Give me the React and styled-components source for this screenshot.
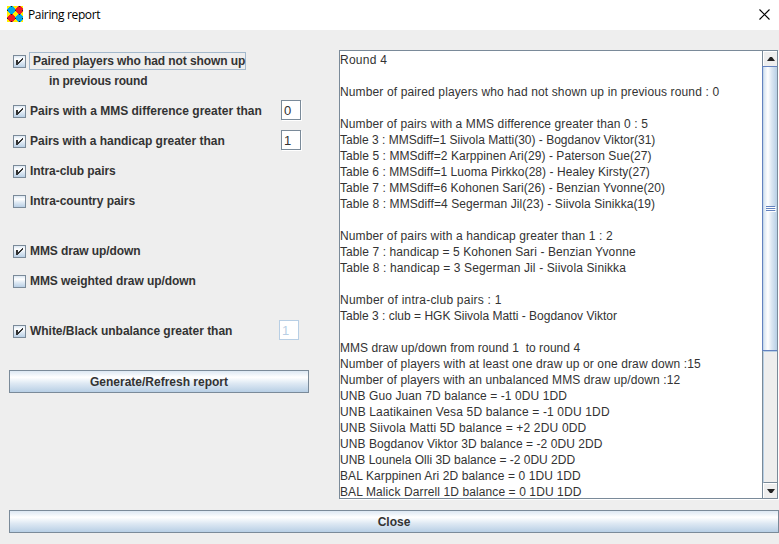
import React from 'react';
import styled, { createGlobalStyle, css } from 'styled-components';

const Global = createGlobalStyle`
  * { box-sizing: border-box; }
  body { margin: 0; overflow: hidden; }
`;

const steel = '#7a8a99';
const gloss = 'linear-gradient(#dde8f3 0, #ffffff 30%, #dde8f3 60%, #b8cfe5 100%)';

const Dialog = styled.div`
  width: 779px;
  height: 544px;
  background: #eee;
  color: #333;
  font: 12px/16px 'Liberation Sans', Arial, sans-serif;
  display: flex;
  flex-direction: column;
  overflow: hidden;
`;

const TitleBar = styled.header`
  height: 30px;
  flex: none;
  background: #fff;
  color: #000;
  display: flex;
  align-items: center;
  padding: 0 9px 2px 7px;
`;

const Title = styled.h1`
  margin: 2px auto 0 5px;
  font: 12px/16px 'Open Sans', 'Noto Sans', sans-serif;
  letter-spacing: -0.36px;
`;

const CloseIcon = styled.svg`
  width: 11px;
  height: 11px;
`;

const Content = styled.main`
  display: grid;
  grid-template-columns: 300px 439px;
  column-gap: 30px;
  padding: 20px 0 0 9px;
  height: 469px;
`;

const Options = styled.section`
  display: flex;
  flex-direction: column;
  padding-top: 1px;
`;

const Option = styled.label`
  display: flex;
  align-items: center;
  height: 20px;
  padding-left: 4px;
  margin-top: ${(p) => p.$gap ?? 10}px;
`;

const Box = styled.span`
  width: 13px;
  height: 13px;
  flex: none;
  border: 1px solid ${steel};
  background: ${gloss};
  svg { display: block; width: 11px; height: 11px; }
`;

const Caption = styled.span`
  margin-left: 4px;
  font-weight: bold;
  white-space: nowrap;
  letter-spacing: ${(p) => p.$spacing || 0}px;
  ${(p) => p.$focused && css`
    margin-left: 3px;
    width: 217px;
    height: 18px;
    border: 1px solid #a3b8cc;
    padding-left: 3px;
  `}
`;

const SubCaption = styled(Caption)`
  margin-left: 40px;
  height: 20px;
  line-height: 20px;
`;

const Field = styled.span`
  width: 20px;
  height: 20px;
  flex: none;
  align-self: flex-start;
  margin: -1px ${(p) => p.$right}px 0 auto;
  border: 1px solid ${(p) => (p.$disabled ? '#b8cfe5' : steel)};
  box-shadow: ${(p) => (p.$disabled ? 'none' : '1px 1px 0 #fff')};
  background: #fff;
  color: ${(p) => (p.$disabled ? '#b8cfe5' : '#333')};
  padding: 2px 0 0 2px;
  font-size: 13px;
  line-height: 16px;
`;

const Button = styled.button`
  height: 23px;
  flex: none;
  padding: 0;
  border: 1px solid ${steel};
  border-radius: 0;
  background: ${gloss};
  color: #333;
  font: bold 12px/20px 'Liberation Sans', Arial, sans-serif;
`;

const GenerateButton = styled(Button)`
  margin-top: 29px;
`;

const CloseButton = styled(Button)`
  margin: 11px 0 0 9px;
`;

const Report = styled.section`
  display: flex;
  border: 1px solid ${steel};
  box-shadow: 1px 1px 0 #fff;
  background: #fff;
  height: 449px;
  overflow: hidden;
`;

const Lines = styled.div`
  flex: 1;
  padding-top: 1px;
`;

const Line = styled.div`
  height: 16px;
  white-space: pre;
  letter-spacing: ${(p) => p.$spacing || 0}px;
`;

const ScrollBar = styled.div`
  width: 15px;
  flex: none;
  display: flex;
  flex-direction: column;
  border-left: 1px solid ${steel};
  background: #eee;
`;

const ArrowButton = styled.div`
  height: 15px;
  flex: none;
  border: 1px solid #fff;
  border-right: 0;
  border-bottom: 0;
  display: flex;
  align-items: center;
  justify-content: center;
  svg { width: 8px; height: 4px; }
`;

const Thumb = styled.div`
  height: 285px;
  flex: none;
  margin-left: -1px;
  border: 1px solid #6382bf;
  border-right: 0;
  background: linear-gradient(90deg, #b8cfe5 0, #dde8f3 10%, #fff 35%, #dde8f3 60%, #b8cfe5 100%);
  display: flex;
  flex-direction: column;
  align-items: center;
  justify-content: center;
  gap: 1px;
`;

const Grip = styled.i`
  width: 9px;
  height: 1px;
  background: #6382bf;
  box-shadow: 1px 1px 0 #fff;
`;

const Track = styled.div`
  flex: 1;
  border-left: 1px solid #b8cfe5;
  border-top: 1px solid #b8cfe5;
  border-bottom: 1px solid ${steel};
`;

const AppIcon = () => (
  <svg width="16" height="16" viewBox="0 0 16 16" shapeRendering="crispEdges">
    <path fill="#ffef00" d="M0 0h16v16H0z" />
    <path fill="#00a6e8" d="M3 0h2l3 3v2L5 8H3L0 5V3zM11 8h2l3 3v2l-3 3h-2l-3-3v-2z" />
    <path fill="#ee1c25" d="M11 0h2l3 3v2l-3 3h-2L8 5V3zM3 8h2l3 3v2l-3 3H3l-3-3v-2z" />
    <path
      fill="#222"
      d="M4 0h1v1H4zM12 0h1v1h-1zM0 4h1v1H0zM8 4h1v1H8zM15 4h1v1h-1zM4 8h1v1H4zM12 8h1v1h-1zM0 12h1v1H0zM8 12h1v1H8zM15 12h1v1h-1zM4 15h1v1H4zM12 15h1v1h-1z"
    />
  </svg>
);

const Check = ({ on }) => (
  <Box>
    {on && (
      <svg viewBox="0 0 11 11" shapeRendering="crispEdges">
        <path fill="#333" d="M2 4h2v2h1V5h1V4h1V3h1V2h1v2H8v1H7v1H6v1H5v1H4v1H2z" />
      </svg>
    )}
  </Box>
);

const options = [
  { text: 'Pairs with a MMS difference greater than', on: true, value: '0', right: 8, spacing: 0.01 },
  { text: 'Pairs with a handicap greater than', on: true, value: '1', right: 8, spacing: -0.02 },
  { text: 'Intra-club pairs', on: true, spacing: -0.06 },
  { text: 'Intra-country pairs', spacing: -0.05 },
  { text: 'MMS draw up/down', on: true, gap: 30, spacing: -0.1 },
  { text: 'MMS weighted draw up/down', spacing: -0.06 },
  { text: 'White/Black unbalance greater than', on: true, gap: 30, value: '1', right: 10, disabled: true, spacing: -0.03 },
];

const report = [
  ['Round 4', 0.25],
  [''],
  ['Number of paired players who had not shown up in previous round : 0', 0.134],
  [''],
  ['Number of pairs with a MMS difference greater than 0 : 5', 0.107],
  ['Table 3 : MMSdiff=1 Siivola Matti(30) - Bogdanov Viktor(31)', 0],
  ['Table 5 : MMSdiff=2 Karppinen Ari(29) - Paterson Sue(27)', 0.07],
  ['Table 6 : MMSdiff=1 Luoma Pirkko(28) - Healey Kirsty(27)', 0.054],
  ['Table 7 : MMSdiff=6 Kohonen Sari(26) - Benzian Yvonne(20)', 0.05],
  ['Table 8 : MMSdiff=4 Segerman Jil(23) - Siivola Sinikka(19)', 0.085],
  [''],
  ['Number of pairs with a handicap greater than 1 : 2', 0.12],
  ['Table 7 : handicap = 5 Kohonen Sari - Benzian Yvonne', 0.09],
  ['Table 8 : handicap = 3 Segerman Jil - Siivola Sinikka', 0.13],
  [''],
  ['Number of intra-club pairs : 1', 0.23],
  ['Table 3 : club = HGK Siivola Matti - Bogdanov Viktor', 0],
  [''],
  ['MMS draw up/down from round 1  to round 4', 0.05],
  ['Number of players with at least one draw up or one draw down :15', 0.125],
  ['Number of players with an unbalanced MMS draw up/down :12', 0.107],
  ['UNB Guo Juan 7D balance = -1 0DU 1DD', 0.09],
  ['UNB Laatikainen Vesa 5D balance = -1 0DU 1DD', 0.15],
  ['UNB Siivola Matti 5D balance = +2 2DU 0DD', 0.17],
  ['UNB Bogdanov Viktor 3D balance = -2 0DU 2DD', 0.07],
  ['UNB Lounela Olli 3D balance = -2 0DU 2DD', 0],
  ['BAL Karppinen Ari 2D balance = 0 1DU 1DD', 0.1],
  ['BAL Malick Darrell 1D balance = 0 1DU 1DD', 0.1],
];

export default function App() {
  return (
    <Dialog>
      <Global />
      <TitleBar>
        <AppIcon />
        <Title>Pairing report</Title>
        <CloseIcon viewBox="0 0 11 11">
          <path d="M.5.5l10 10M10.5.5l-10 10" stroke="#000" strokeWidth="1.1" />
        </CloseIcon>
      </TitleBar>
      <Content>
        <Options>
          <Option $gap={0}>
            <Check on />
            <Caption $focused $spacing={-0.09}>Paired players who had not shown up</Caption>
          </Option>
          <SubCaption $spacing={-0.18}>in previous round</SubCaption>
          {options.map((o) => (
            <Option key={o.text} $gap={o.gap}>
              <Check on={o.on} />
              <Caption $spacing={o.spacing}>{o.text}</Caption>
              {o.value && <Field $right={o.right} $disabled={o.disabled}>{o.value}</Field>}
            </Option>
          ))}
          <GenerateButton>Generate/Refresh report</GenerateButton>
        </Options>
        <Report>
          <Lines>
            {report.map(([text, spacing], i) => (
              <Line key={i} $spacing={spacing}>{text}</Line>
            ))}
          </Lines>
          <ScrollBar>
            <ArrowButton>
              <svg viewBox="0 0 8 4"><path fill="#222" d="M3 0h2l3 4H0z" /></svg>
            </ArrowButton>
            <Thumb><Grip /><Grip /><Grip /></Thumb>
            <Track />
            <ArrowButton>
              <svg viewBox="0 0 8 4"><path fill="#222" d="M0 0h8L5 4H3z" /></svg>
            </ArrowButton>
          </ScrollBar>
        </Report>
      </Content>
      <CloseButton>Close</CloseButton>
    </Dialog>
  );
}
